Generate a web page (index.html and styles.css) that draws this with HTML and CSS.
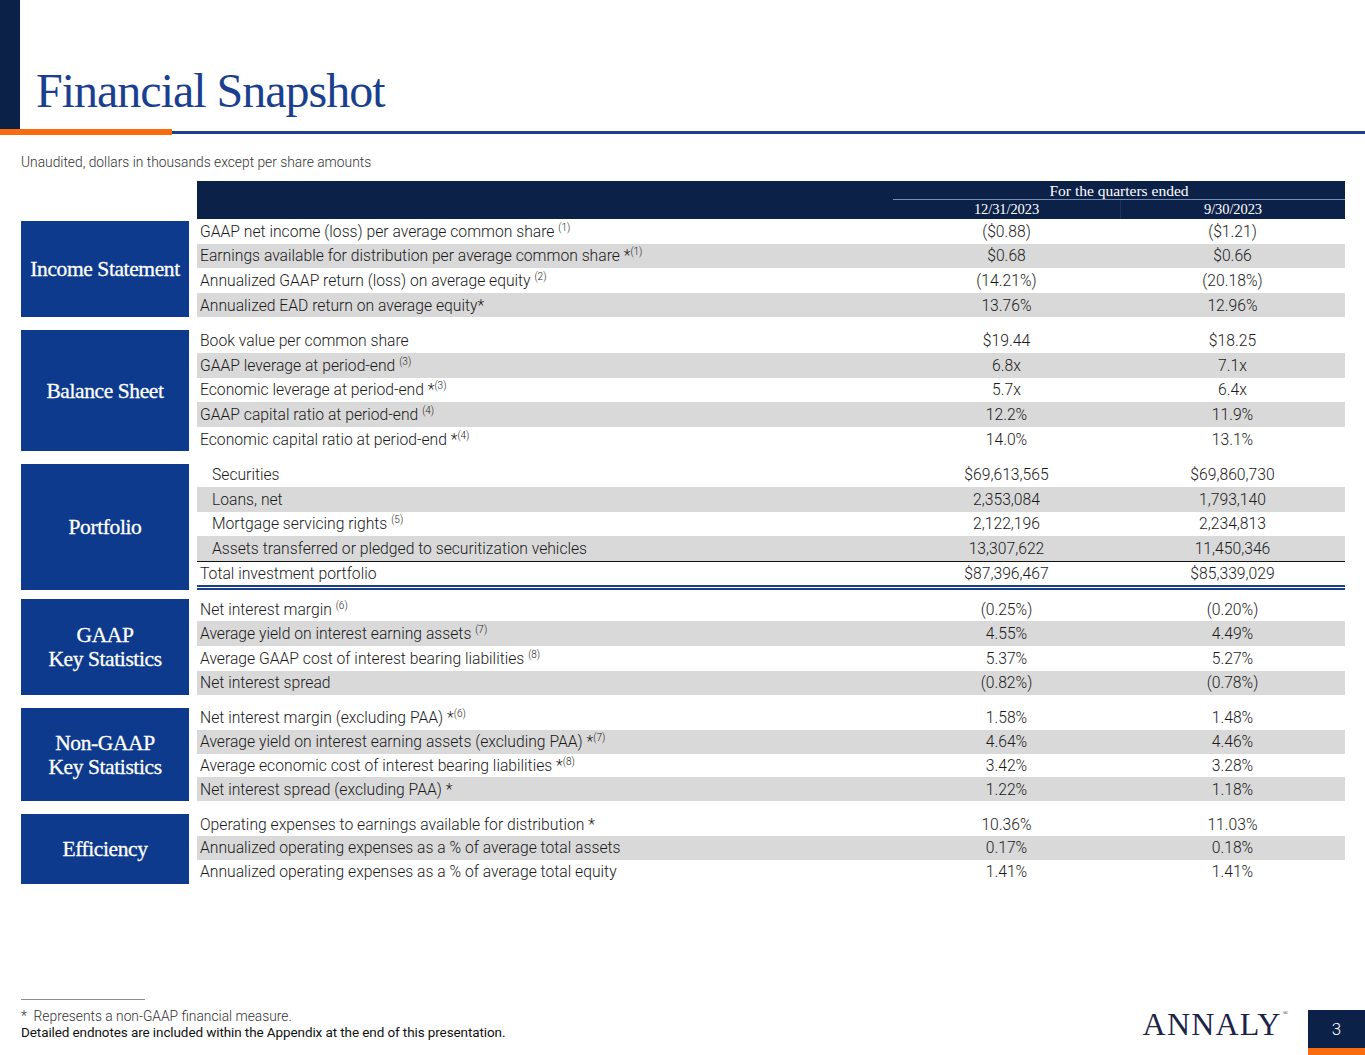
FILE: index.html
```html
<!DOCTYPE html>
<html lang="en">
<head>
<meta charset="utf-8">
<title>Financial Snapshot</title>
<link rel="stylesheet" href="styles.css">
</head>
<body>
<div class="page">
  <header class="top">
    <div class="accent"></div>
    <h1 class="title">Financial Snapshot</h1>
  </header>
  <div class="rule"><div class="rule-orange"></div><div class="rule-blue"></div></div>
  <p class="subtitle">Unaudited, dollars in thousands except per share amounts</p>

  <div class="sheet">
    <div class="section head-section">
      <div></div>
      <div class="thead">
        <div class="thead-blank"></div>
        <div class="thead-cols">
          <div class="thead-title">For the quarters ended</div>
          <div class="thead-dates"><span>12/31/2023</span><span class="sep">9/30/2023</span></div>
        </div>
      </div>
    </div>

    <div class="section">
      <div class="label-box">Income Statement</div>
      <div class="rows">
        <div class="row"><span class="name">GAAP net income (loss) per average common share <sup>(1)</sup></span><span class="val">($0.88)</span><span class="val">($1.21)</span></div>
        <div class="row alt"><span class="name">Earnings available for distribution per average common share *<sup>(1)</sup></span><span class="val">$0.68</span><span class="val">$0.66</span></div>
        <div class="row"><span class="name">Annualized GAAP return (loss) on average equity <sup>(2)</sup></span><span class="val">(14.21%)</span><span class="val">(20.18%)</span></div>
        <div class="row alt"><span class="name">Annualized EAD return on average equity*</span><span class="val">13.76%</span><span class="val">12.96%</span></div>
      </div>
    </div>

    <div class="section">
      <div class="label-box">Balance Sheet</div>
      <div class="rows">
        <div class="row"><span class="name">Book value per common share</span><span class="val">$19.44</span><span class="val">$18.25</span></div>
        <div class="row alt"><span class="name">GAAP leverage at period-end <sup>(3)</sup></span><span class="val">6.8x</span><span class="val">7.1x</span></div>
        <div class="row"><span class="name">Economic leverage at period-end *<sup>(3)</sup></span><span class="val">5.7x</span><span class="val">6.4x</span></div>
        <div class="row alt"><span class="name">GAAP capital ratio at period-end <sup>(4)</sup></span><span class="val">12.2%</span><span class="val">11.9%</span></div>
        <div class="row"><span class="name">Economic capital ratio at period-end *<sup>(4)</sup></span><span class="val">14.0%</span><span class="val">13.1%</span></div>
      </div>
    </div>

    <div class="section portfolio">
      <div class="label-box">Portfolio</div>
      <div class="rows">
        <div class="row"><span class="name indent">Securities</span><span class="val">$69,613,565</span><span class="val">$69,860,730</span></div>
        <div class="row alt"><span class="name indent">Loans, net</span><span class="val">2,353,084</span><span class="val">1,793,140</span></div>
        <div class="row"><span class="name indent">Mortgage servicing rights <sup>(5)</sup></span><span class="val">2,122,196</span><span class="val">2,234,813</span></div>
        <div class="row alt"><span class="name indent">Assets transferred or pledged to securitization vehicles</span><span class="val">13,307,622</span><span class="val">11,450,346</span></div>
        <div class="row total"><span class="name">Total investment portfolio</span><span class="val">$87,396,467</span><span class="val">$85,339,029</span></div>
      </div>
    </div>

    <div class="section">
      <div class="label-box">GAAP<br>Key Statistics</div>
      <div class="rows">
        <div class="row"><span class="name">Net interest margin <sup>(6)</sup></span><span class="val">(0.25%)</span><span class="val">(0.20%)</span></div>
        <div class="row alt"><span class="name">Average yield on interest earning assets <sup>(7)</sup></span><span class="val">4.55%</span><span class="val">4.49%</span></div>
        <div class="row"><span class="name">Average GAAP cost of interest bearing liabilities <sup>(8)</sup></span><span class="val">5.37%</span><span class="val">5.27%</span></div>
        <div class="row alt"><span class="name">Net interest spread</span><span class="val">(0.82%)</span><span class="val">(0.78%)</span></div>
      </div>
    </div>

    <div class="section tight">
      <div class="label-box">Non-GAAP<br>Key Statistics</div>
      <div class="rows">
        <div class="row"><span class="name">Net interest margin (excluding PAA) *<sup>(6)</sup></span><span class="val">1.58%</span><span class="val">1.48%</span></div>
        <div class="row alt"><span class="name">Average yield on interest earning assets (excluding PAA) *<sup>(7)</sup></span><span class="val">4.64%</span><span class="val">4.46%</span></div>
        <div class="row"><span class="name">Average economic cost of interest bearing liabilities *<sup>(8)</sup></span><span class="val">3.42%</span><span class="val">3.28%</span></div>
        <div class="row alt"><span class="name">Net interest spread (excluding PAA) *</span><span class="val">1.22%</span><span class="val">1.18%</span></div>
      </div>
    </div>

    <div class="section tight">
      <div class="label-box">Efficiency</div>
      <div class="rows">
        <div class="row"><span class="name">Operating expenses to earnings available for distribution *</span><span class="val">10.36%</span><span class="val">11.03%</span></div>
        <div class="row alt"><span class="name">Annualized operating expenses as a % of average total assets</span><span class="val">0.17%</span><span class="val">0.18%</span></div>
        <div class="row"><span class="name">Annualized operating expenses as a % of average total equity</span><span class="val">1.41%</span><span class="val">1.41%</span></div>
      </div>
    </div>
  </div>

  <footer class="foot">
    <div class="notes">
      <div class="note-rule"></div>
      <p class="note">*&nbsp; Represents a non-GAAP financial measure.</p>
      <p class="note strong">Detailed endnotes are included within the Appendix at the end of this presentation.</p>
    </div>
    <div class="brand">
      <div class="logo">ANNALY<span class="reg">®</span></div>
      <div class="pagenum"><span>3</span></div>
    </div>
  </footer>
</div>
</body>
</html>
```

FILE: styles.css
```css
* { box-sizing: border-box; }
html, body { margin: 0; padding: 0; background: #fff; }
body { font-family: Roboto, "Liberation Sans", sans-serif; color: #222; }

.page {
  width: 1365px;
  height: 1055px;
  display: flex;
  flex-direction: column;
  overflow: hidden;
}

.top { display: flex; height: 129px; }
.accent { width: 20px; background: #0c2148; }
.title {
  margin: 0;
  align-self: flex-end;
  padding: 0 0 14px 16px;
  font-family: "Liberation Serif", serif;
  font-weight: 400;
  font-size: 48px;
  line-height: 1;
  letter-spacing: -1px;
  color: #1b3f8f;
}

.rule { display: flex; height: 7px; }
.rule-orange { width: 172px; height: 6px; background: #f96b0c; }
.rule-blue { flex: 1; height: 3px; margin-top: 2px; background: #1b3f8f; }

.subtitle {
  margin: 18px 0 0 21px;
  font-size: 13.8px;
  line-height: 17px;
  font-weight: 300;
  color: #333;
}

.sheet {
  margin: 10px 20px 0 21px;
  display: flex;
  flex-direction: column;
  gap: 11px;
}

.section {
  display: grid;
  grid-template-columns: 168px 1fr;
  column-gap: 8px;
}
.head-section { margin-bottom: -11px; }
.portfolio { margin-bottom: -4px; }

.thead {
  display: grid;
  grid-template-columns: 696px 1fr;
  background: #0c2148;
  height: 38px;
  color: #fff;
  font-family: "Liberation Serif", serif;
}
.thead-cols { display: flex; flex-direction: column; }
.thead-title {
  height: 19px;
  text-align: center;
  font-size: 15.5px;
  line-height: 19px;
  border-bottom: 1px solid #7b8db3;
}
.thead-dates {
  flex: 1;
  display: grid;
  grid-template-columns: 227px 1fr;
  font-size: 14.5px;
  line-height: 18px;
  text-align: center;
  letter-spacing: -0.1px;
}
.thead-dates .sep { border-left: 1px solid #1d325c; }

.label-box {
  background: #0d3a8c;
  color: #fff;
  font-family: "Liberation Serif", serif;
  font-size: 21.5px;
  letter-spacing: -0.4px;
  line-height: 1.12;
  -webkit-text-stroke: 0.3px #fff;
  display: flex;
  align-items: center;
  justify-content: center;
  text-align: center;
  margin: 2px 0 0;
}

.rows { display: flex; flex-direction: column; }
.row {
  display: grid;
  grid-template-columns: 696px 227px 1fr;
  height: 24.6px;
  align-items: center;
  font-size: 15.7px;
  font-weight: 300;
  color: #1a1a1a;
}
.tight .row { height: 23.8px; }
.row.alt { background: #d9d9d9; }
.row.total {
  border-top: 1.5px solid #111;
  border-bottom: 5px double #1b3f8f;
  height: 29px;
}
.name { padding-left: 3px; white-space: nowrap; }
.name.indent { padding-left: 15px; }
.val { text-align: center; }
sup {
  font-size: 10px;
  vertical-align: 6px;
  line-height: 0;
}

.foot {
  margin-top: auto;
  height: 56px;
  display: flex;
  justify-content: space-between;
  align-items: flex-start;
  padding-left: 21px;
}
.note-rule { width: 124px; height: 1px; background: #8c8c8c; margin-bottom: 8px; }
.note {
  margin: 0;
  font-size: 13.8px;
  line-height: 16px;
  font-weight: 300;
  color: #333;
}
.note.strong { font-weight: 400; color: #111; letter-spacing: -0.1px; font-size: 13.5px; }

.brand { display: flex; align-items: flex-start; gap: 20px; padding-top: 11px; }
.logo {
  font-family: "Liberation Serif", serif;
  font-size: 32px;
  letter-spacing: 1.2px;
  color: #1c2447;
  line-height: 26px;
  margin-top: -10px;
  height: 30px;
}
.reg { font-size: 7px; vertical-align: 20px; letter-spacing: 0; margin-left: 1px; }
.pagenum {
  width: 57px;
  height: 45px;
  background: #0c2148;
  border-bottom: 7px solid #f96b0c;
  color: #fff;
  display: flex;
  align-items: center;
  justify-content: center;
  font-size: 17px;
  font-weight: 300;
}
```
